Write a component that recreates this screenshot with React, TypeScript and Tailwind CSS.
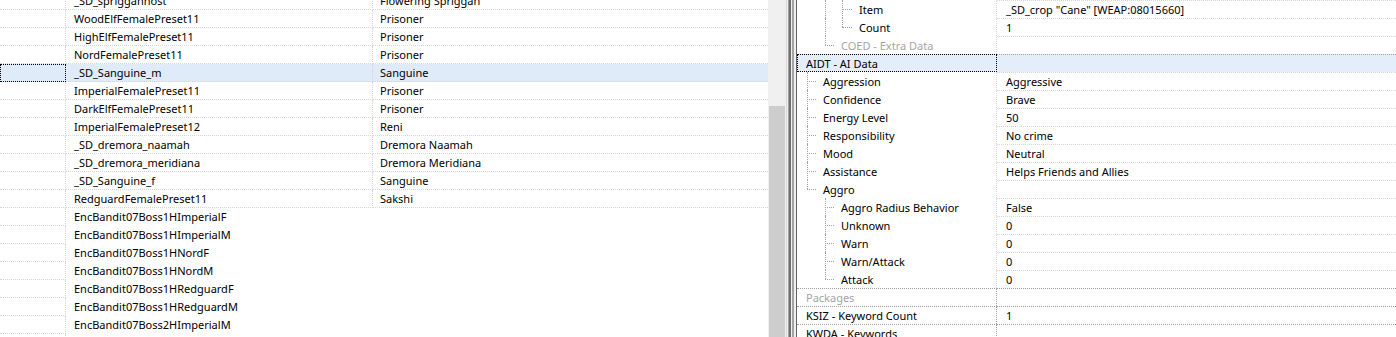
import React from "react";

type LRow = { n: string; v?: string; sel?: boolean; enc?: boolean };

const leftRows: LRow[] = [
  { n: "_SD_spriggannost", v: "Flowering Spriggan" },
  { n: "WoodElfFemalePreset11", v: "Prisoner" },
  { n: "HighElfFemalePreset11", v: "Prisoner" },
  { n: "NordFemalePreset11", v: "Prisoner" },
  { n: "_SD_Sanguine_m", v: "Sanguine", sel: true },
  { n: "ImperialFemalePreset11", v: "Prisoner" },
  { n: "DarkElfFemalePreset11", v: "Prisoner" },
  { n: "ImperialFemalePreset12", v: "Reni" },
  { n: "_SD_dremora_naamah", v: "Dremora Naamah" },
  { n: "_SD_dremora_meridiana", v: "Dremora Meridiana" },
  { n: "_SD_Sanguine_f", v: "Sanguine" },
  { n: "RedguardFemalePreset11", v: "Sakshi" },
  { n: "EncBandit07Boss1HImperialF", enc: true },
  { n: "EncBandit07Boss1HImperialM", enc: true },
  { n: "EncBandit07Boss1HNordF", enc: true },
  { n: "EncBandit07Boss1HNordM", enc: true },
  { n: "EncBandit07Boss1HRedguardF", enc: true },
  { n: "EncBandit07Boss1HRedguardM", enc: true },
  { n: "EncBandit07Boss2HImperialM", enc: true },
  { n: "", enc: true },
];

type Guide = { x: number; kind: "full" | "mid" | "last"; len?: number };
type RRow = {
  n: string;
  v?: string;
  tx: number;
  top?: boolean;
  grey?: boolean;
  sel?: boolean;
  guides?: Guide[];
};

const L1 = 10;
const L2 = 28;
const L3 = 45;

const rightRows: RRow[] = [
  { n: "Item", v: '_SD_crop "Cane" [WEAP:08015660]', tx: 62, guides: [{ x: L2, kind: "full" }, { x: L3, kind: "mid", len: 10 }] },
  { n: "Count", v: "1", tx: 62, guides: [{ x: L2, kind: "full" }, { x: L3, kind: "last", len: 10 }] },
  { n: "COED - Extra Data", tx: 44, grey: true, guides: [{ x: L2, kind: "last", len: 9 }] },
  { n: "AIDT - AI Data", tx: 9, top: true, sel: true },
  { n: "Aggression", v: "Aggressive", tx: 26, guides: [{ x: L1, kind: "mid", len: 9 }] },
  { n: "Confidence", v: "Brave", tx: 26, guides: [{ x: L1, kind: "mid", len: 9 }] },
  { n: "Energy Level", v: "50", tx: 26, guides: [{ x: L1, kind: "mid", len: 9 }] },
  { n: "Responsibility", v: "No crime", tx: 26, guides: [{ x: L1, kind: "mid", len: 9 }] },
  { n: "Mood", v: "Neutral", tx: 26, guides: [{ x: L1, kind: "mid", len: 9 }] },
  { n: "Assistance", v: "Helps Friends and Allies", tx: 26, guides: [{ x: L1, kind: "mid", len: 9 }] },
  { n: "Aggro", tx: 26, guides: [{ x: L1, kind: "last", len: 9 }] },
  { n: "Aggro Radius Behavior", v: "False", tx: 44, guides: [{ x: L2, kind: "mid", len: 9 }] },
  { n: "Unknown", v: "0", tx: 44, guides: [{ x: L2, kind: "mid", len: 9 }] },
  { n: "Warn", v: "0", tx: 44, guides: [{ x: L2, kind: "mid", len: 9 }] },
  { n: "Warn/Attack", v: "0", tx: 44, guides: [{ x: L2, kind: "mid", len: 9 }] },
  { n: "Attack", v: "0", tx: 44, guides: [{ x: L2, kind: "last", len: 9 }] },
  { n: "Packages", tx: 9, top: true, grey: true },
  { n: "KSIZ - Keyword Count", v: "1", tx: 9, top: true },
  { n: "KWDA - Keywords", tx: 9, top: true },
];

function Guides({ guides }: { guides?: Guide[] }) {
  if (!guides) return null;
  return (
    <>
      {guides.map((g, i) => (
        <React.Fragment key={i}>
          {g.kind !== "last" && (
            <span className="absolute top-[-1px] bottom-0 w-0 border-l border-dotted border-[#a0a0a0]" style={{ left: g.x }} />
          )}
          {g.kind === "last" && (
            <span className="absolute top-[-1px] h-[9px] w-0 border-l border-dotted border-[#a0a0a0]" style={{ left: g.x }} />
          )}
          {g.kind !== "full" && (
            <span className="absolute top-[8px] h-0 border-t border-dotted border-[#a0a0a0]" style={{ left: g.x, width: g.len }} />
          )}
        </React.Fragment>
      ))}
    </>
  );
}

export default function App() {
  return (
    <div className="flex h-[337px] w-[1396px] overflow-hidden bg-white font-['Noto_Sans','Open_Sans',sans-serif] text-[11px] leading-[17px] text-black">
      {/* Left list */}
      <div className="w-[768px] shrink-0 overflow-hidden">
        <div className="mt-[-8px] flex flex-col">
          {leftRows.map((r, i) => (
            <div key={i} className={`flex h-[18px] shrink-0 ${r.sel ? "bg-[#dfebf9]" : ""}`}>
              <div
                className={`h-[18px] w-[66px] shrink-0 border-dotted ${
                  r.sel ? "border border-black" : "border-b border-r border-[#d6d6d6]"
                }`}
              />
              <div
                className={`h-[18px] w-[307px] shrink-0 truncate pl-[8px] ${
                  r.enc ? "" : "border-b border-r border-dotted border-[#d6d6d6]"
                }`}
              >
                {r.n}
              </div>
              <div
                className={`h-[18px] flex-1 truncate pl-[7px] ${
                  r.enc ? "" : "border-b border-dotted border-[#d6d6d6]"
                }`}
              >
                {r.v}
              </div>
            </div>
          ))}
        </div>
      </div>

      {/* Scrollbar */}
      <div className="flex w-[18px] shrink-0 flex-col bg-[#f0f0f0]">
        <div className="h-[106px] shrink-0" />
        <div className="ml-[1px] w-[16px] flex-1 bg-[#cdcdcd]" />
      </div>

      {/* Splitter */}
      <div className="flex shrink-0">
        <div className="w-[1px] bg-[#dadada]" />
        <div className="w-[1px] bg-[#f0f0f0]" />
        <div className="w-[1px] bg-[#a0a0a0]" />
        <div className="w-[2px] bg-[#6f6f6f]" />
        <div className="w-[1px] bg-[#f0f0f0]" />
        <div className="w-[2px] bg-[#a3a3a3]" />
        <div className="w-[2px] bg-[#f0f0f0]" />
        <div className="w-[1px] bg-[#646464]" />
      </div>

      {/* Right tree */}
      <div className="flex-1 overflow-hidden">
        <div className="flex flex-col">
          {rightRows.map((r, i) => {
            const lineColor = r.top ? "border-[#a0a0a0]" : "border-[#d6d6d6]";
            return (
              <div key={i} className={`flex h-[18px] shrink-0 ${r.sel ? "bg-[#e3eefa]" : ""}`}>
                <div
                  className={`relative h-[18px] w-[200px] shrink-0 border-dotted ${
                    r.sel
                      ? "border border-black"
                      : r.top
                      ? "border-t border-r border-[#a0a0a0]"
                      : "border-t border-r border-t-transparent border-r-[#d6d6d6]"
                  } ${r.grey ? "text-[#a4a4a4]" : ""}`}
                >
                  <Guides guides={r.guides} />
                  <span className="absolute top-0 whitespace-nowrap" style={{ left: r.sel ? r.tx - 1 : r.tx }}>
                    {r.n}
                  </span>
                </div>
                <div className={`h-[18px] flex-1 truncate border-t border-dotted pl-[9px] ${lineColor}`}>{r.v}</div>
              </div>
            );
          })}
        </div>
      </div>
    </div>
  );
}
